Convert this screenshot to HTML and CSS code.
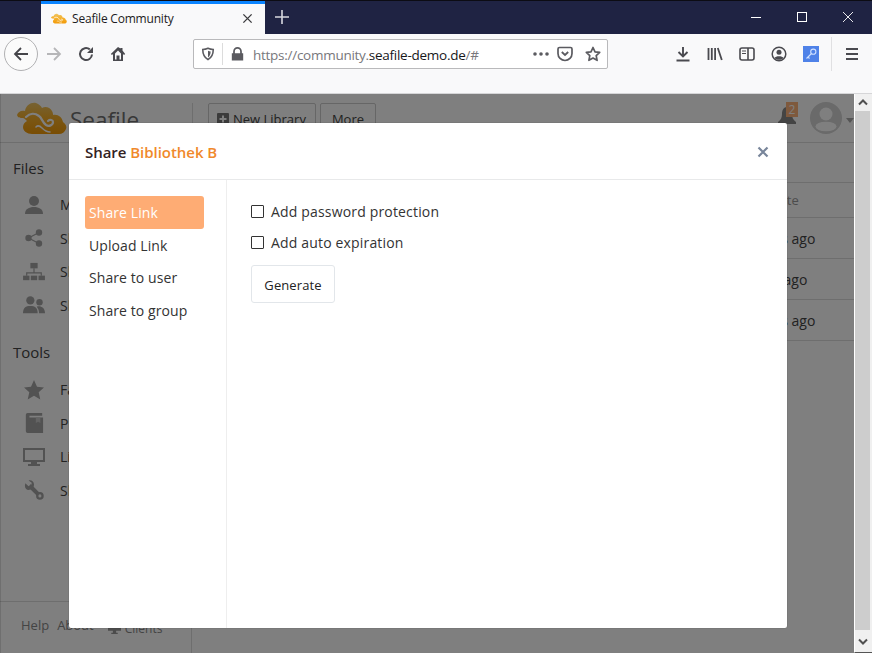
FILE: index.html
```html
<!DOCTYPE html>
<html lang="en">
<head>
<meta charset="utf-8">
<title>Seafile Community</title>
<link rel="stylesheet" href="styles.css">
</head>
<body>
<svg class="defs" width="0" height="0" aria-hidden="true">
  <defs>
    <linearGradient id="cloudgrad" x1="0" y1="0" x2="0" y2="1">
      <stop offset="0" stop-color="#eec566"/>
      <stop offset=".45" stop-color="#f5b02c"/>
      <stop offset="1" stop-color="#f29a08"/>
    </linearGradient>
    <symbol id="cloud" viewBox="0 0 50 32">
      <path fill="url(#cloudgrad)" d="M0 13C1 10 4 8 8 9 9 3 14 0 19 1c3 1 5 3 6 5 3-2 8-1 10 3 1 2 1 3 1 4 5-1 9 2 10 7 3 2 4 5 3 7-1 3-4 5-7 5H15C10 32 6 29 6 25c0-3 2-5 4-6-2-2-3-3-4-3-3 0-5 0-6-3z"/>
      <path fill="none" stroke="#fff" stroke-width="2.200" stroke-linecap="round" d="M9 15c4-4 9-4 13-1 3 2 3 6 7 9 3 2 7 0 7-3 0-2-3-3-5-1"/>
      <path fill="none" stroke="#fff" stroke-width="1.600" stroke-linecap="round" d="M19 25c2-2 4-1 6 1 2 2 5 4 8 4"/>
    </symbol>
  </defs>
</svg>
<div class="window">
  <div class="titlebar">
    <div class="tab">
      <svg class="favicon"><use href="#cloud"/></svg>
      <span class="tab-title">Seafile Community</span>
      <svg class="tab-close" viewBox="0 0 12 12"><path d="M1.500 1.500l9 9M10.500 1.500l-9 9" stroke="#3c3c3e" stroke-width="1.500" fill="none"/></svg>
    </div>
    <svg class="newtab" viewBox="0 0 14 14"><path d="M7 0v14M0 7h14" stroke="#d8d9e0" stroke-width="1.600" fill="none"/></svg>
    <div class="winctl">
      <svg class="winbtn" viewBox="0 0 10 10"><path d="M0 5.500h10" stroke="#fff" fill="none"/></svg>
      <svg class="winbtn" viewBox="0 0 10 10"><rect x=".5" y=".5" width="9" height="9" stroke="#fff" fill="none"/></svg>
      <svg class="winbtn" viewBox="0 0 10 10"><path d="M0 0l10 10M10 0L0 10" stroke="#fff" stroke-width=".9" fill="none"/></svg>
    </div>
  </div>
  <div class="toolbar">
    <div class="back"><svg class="ico" viewBox="0 0 16 16"><path d="M15 8H2M8 2L2 8l6 6" stroke="#45454a" stroke-width="1.800" fill="none"/></svg></div>
    <svg class="ico fwd" viewBox="0 0 16 16"><path d="M1 8h13M8 2l6 6-6 6" stroke="#b6b6b8" stroke-width="1.800" fill="none"/></svg>
    <svg class="ico reload" viewBox="0 0 16 16"><path d="M14 8.500A6 6 0 1 1 11.800 3.400" stroke="#4a4a4f" stroke-width="2" fill="none"/><path d="M15 1v6H9z" fill="#4a4a4f"/></svg>
    <svg class="ico home" viewBox="0 0 16 16"><path d="M8 1L.8 8l1.200 1L3 8v7h10V8l1 1 1.200-1L12.500 4.500V2h-2v.6z M5 13.500V7.500L8 4.500l3 3v6H9.500V9.500h-3v4z" fill="#4a4a4f" fill-rule="evenodd"/></svg>
    <div class="urlbar">
      <svg class="shield" viewBox="0 0 16 16"><path d="M8 1.500c2 .9 4 1.300 6 1.300 0 5-1.500 9-6 11.700C3.500 11.800 2 7.800 2 2.800c2 0 4-.4 6-1.300z" fill="none" stroke="#5b5b60" stroke-width="1.800"/><path d="M8 4.300c1 .4 2 .6 3 .7 0 3-1 5.500-3 7z" fill="#5b5b60"/></svg>
      <span class="url-divider"></span>
      <svg class="lock" viewBox="0 0 14 16"><path d="M2 7V5a5 5 0 0 1 10 0v2h1.500v8.500H.5V7zM4 7h6V5a3 3 0 0 0-6 0z" fill="#5b5b60" fill-rule="evenodd"/></svg>
      <span class="url"><span class="url-dim">https://community.</span>seafile-demo.de<span class="url-dim">/#</span></span>
      <svg class="dots" viewBox="0 0 16 4"><circle cx="2" cy="2" r="1.800" fill="#5b5b60"/><circle cx="8" cy="2" r="1.800" fill="#5b5b60"/><circle cx="14" cy="2" r="1.800" fill="#5b5b60"/></svg>
      <svg class="pocket" viewBox="0 0 16 16"><path d="M1 3c0-1 .5-1.500 1.500-1.500h11c1 0 1.500.5 1.500 1.500v4.500a7 7 0 0 1-14 0z" fill="none" stroke="#5b5b60" stroke-width="1.700"/><path d="M4.800 6L8 9l3.200-3" fill="none" stroke="#5b5b60" stroke-width="1.800"/></svg>
      <svg class="star" viewBox="0 0 16 16"><path d="M8 1.500l2 4.300 4.700.6-3.500 3.200.9 4.700L8 12l-4.100 2.300.9-4.700L1.300 6.400 6 5.800z" fill="none" stroke="#5b5b60" stroke-width="1.700" stroke-linejoin="round"/></svg>
    </div>
    <div class="tools">
      <svg class="ico" viewBox="0 0 16 16"><path d="M8 1v9M3.500 6L8 10.500 12.500 6M1.500 14.500h13" stroke="#4a4a4f" stroke-width="1.900" fill="none"/></svg>
      <svg class="ico" viewBox="0 0 16 16"><path d="M1.500 2v12M4.800 2v12M8.100 2v12M10.800 2l4 12" stroke="#4a4a4f" stroke-width="1.800" fill="none"/></svg>
      <svg class="ico" viewBox="0 0 16 16"><rect x="1" y="2" width="14" height="12" rx="2" fill="none" stroke="#4a4a4f" stroke-width="1.600"/><path d="M9 2v12" stroke="#4a4a4f" stroke-width="1.600"/><path d="M3 5h4M3 7.500h4" stroke="#4a4a4f" stroke-width="1.200"/></svg>
      <svg class="ico" viewBox="0 0 16 16"><circle cx="8" cy="8" r="6.800" fill="none" stroke="#4a4a4f" stroke-width="1.500"/><circle cx="8" cy="6.200" r="2.500" fill="#4a4a4f"/><path d="M3.500 12c1-2.300 8-2.300 9 0-2 2.400-7 2.400-9 0z" fill="#4a4a4f"/></svg>
      <svg class="ico" viewBox="0 0 16 16"><rect width="16" height="16" fill="#4f82e8"/><circle cx="10.300" cy="5.700" r="2.600" fill="none" stroke="#cfe0ff" stroke-width="1.100"/><path d="M8.500 7.500L3.500 12.500M5 11l1.500 1.500" stroke="#cfe0ff" stroke-width="1.100" fill="none"/></svg>
      <span class="tool-divider"></span>
      <svg class="ico menu" viewBox="0 0 16 16"><path d="M2 3h12M2 8h12M2 13h12" stroke="#4a4a4f" stroke-width="1.800" fill="none"/></svg>
    </div>
  </div>
  <div class="viewport">
    <div class="page">
      <header class="page-head">
        <div class="brand">
          <svg class="logo"><use href="#cloud"/></svg>
          <span class="brand-name">Seafile</span>
        </div>
        <button class="page-btn"><svg class="plus" viewBox="0 0 12 12"><rect width="12" height="12" rx="1" fill="#777"/><path d="M6 2.500v7M2.500 6h7" stroke="#fff" stroke-width="2"/></svg>New Library</button>
        <button class="page-btn">More</button>
        <div class="user">
          <div class="bell">
            <svg class="bell-icon" viewBox="0 0 18 17"><path d="M9 0c4 0 5 4 5 7 0 3 1 6 4 8v2H0v-2c3-2 4-5 4-8 0-3 1-7 5-7z" fill="#888"/></svg>
            <span class="badge">2</span>
          </div>
          <svg class="avatar" viewBox="0 0 32 32"><circle cx="16" cy="16" r="16" fill="#d4d4d4"/><circle cx="16" cy="12" r="6.500" fill="#fff"/><ellipse cx="16" cy="24.500" rx="10.500" ry="4.800" fill="#fff"/></svg>
          <span class="caret"></span>
        </div>
      </header>
      <div class="page-body">
        <aside class="side">
          <div class="side-main">
            <h3 class="side-title">Files</h3>
            <a class="side-item"><svg class="side-icon" viewBox="0 0 20 20"><circle cx="10" cy="6" r="5" fill="#a4a4a4"/><path d="M1 19c0-5 4-7 9-7s9 2 9 7z" fill="#a4a4a4"/></svg>My Libraries</a>
            <a class="side-item"><svg class="side-icon" viewBox="0 0 20 20"><circle cx="4.500" cy="10" r="3.200" fill="#a4a4a4"/><circle cx="15" cy="4.500" r="3.200" fill="#a4a4a4"/><circle cx="15" cy="15.500" r="3.200" fill="#a4a4a4"/><path d="M4.500 10L15 4.500M4.500 10L15 15.500" stroke="#a4a4a4" stroke-width="1.300"/></svg>Shared with me</a>
            <a class="side-item"><svg class="side-icon" viewBox="0 0 24 22"><rect x="8" y="1" width="8" height="6" fill="#a4a4a4"/><path d="M12 7v5M4 15v-3h16v3" stroke="#a4a4a4" stroke-width="1.300" fill="none"/><rect y="15" width="7" height="5" fill="#a4a4a4"/><rect x="8.500" y="15" width="7" height="5" fill="#a4a4a4"/><rect x="17" y="15" width="7" height="5" fill="#a4a4a4"/></svg>Shared with all</a>
            <a class="side-item"><svg class="side-icon" viewBox="0 0 24 20"><circle cx="8" cy="5" r="4.500" fill="#a4a4a4"/><circle cx="18" cy="7" r="3.500" fill="#a4a4a4"/><path d="M0 19c0-6 3-8 8-8s8 2 8 8z" fill="#a4a4a4"/><path d="M17.500 19c0-3-1-5-2.500-7 3-1.500 9 0 9 7z" fill="#a4a4a4"/></svg>Shared groups</a>
            <h3 class="side-title side-tools">Tools</h3>
            <a class="side-item"><svg class="side-icon" viewBox="0 0 20 20"><path d="M10 0l3 6.800 7 .7-5.300 4.700 1.600 7.300-6.300-3.800-6.300 3.800 1.600-7.300L0 7.500l7-.7z" fill="#a4a4a4"/></svg>Favorites</a>
            <a class="side-item"><svg class="side-icon" viewBox="0 0 20 22"><path d="M3 0h16v3H5v2h15v17H3a2 2 0 0 1-2-2V2a2 2 0 0 1 2-2z" fill="#a4a4a4"/><path d="M12 5h5v6l-2.500-1.500L12 11z" fill="#c8c8c8"/></svg>Published</a>
            <a class="side-item"><svg class="side-icon" viewBox="0 0 22 20"><path d="M0 1h22v14H14v2h3v2H5v-2h3v-2H0zM2 3v10h18V3z" fill="#a4a4a4" fill-rule="evenodd"/></svg>Linked Devices</a>
            <a class="side-item"><svg class="side-icon" viewBox="0 0 22 22"><path d="M6 6l12 12" stroke="#a4a4a4" stroke-width="4.500" fill="none"/><path d="M1.500 3.500L5 7l3-.5L8.500 3 5 .5C8 -.5 11 1.500 11 5s-3 6-6 6-5-3-3.500-7.500z" fill="#a4a4a4"/><circle cx="17.500" cy="17.500" r="4.200" fill="#a4a4a4"/><circle cx="17.500" cy="17.500" r="1.700" fill="#fff"/></svg>Share Admin</a>
          </div>
          <footer class="side-foot">
            <a>Help</a><a>About</a>
            <a class="foot-clients"><svg class="foot-icon" viewBox="0 0 12 10"><path d="M0 0h12v7H7.500v2H9v1H3V9h1.500V7H0z" fill="#999"/></svg>Clients</a>
          </footer>
        </aside>
        <main class="content">
          <div class="tabs-row"></div>
          <div class="row row-head"><span></span><span class="col-time">Last Update</span></div>
          <div class="row"><span></span><span class="col-time">11 months ago</span></div>
          <div class="row"><span></span><span class="col-time">3 months ago</span></div>
          <div class="row"><span></span><span class="col-time">11 months ago</span></div>
        </main>
      </div>
      <div class="backdrop"></div>
      <section class="modal">
        <div class="modal-head">
          <h2 class="modal-title">Share <span class="modal-name">Bibliothek B</span></h2>
          <svg class="modal-close" viewBox="0 0 12 12"><path d="M1.500 1.500l9 9M10.500 1.500l-9 9" stroke="#78859a" stroke-width="2.200" fill="none"/></svg>
        </div>
        <div class="modal-body">
          <nav class="modal-nav">
            <a class="nav-link is-active">Share Link</a>
            <a class="nav-link">Upload Link</a>
            <a class="nav-link">Share to user</a>
            <a class="nav-link">Share to group</a>
          </nav>
          <div class="modal-main">
            <label class="check"><span class="box"></span>Add password protection</label>
            <label class="check"><span class="box"></span>Add auto expiration</label>
            <button class="generate">Generate</button>
          </div>
        </div>
      </section>
    </div>
    <div class="scrollbar">
      <div class="scroll-btn"><svg class="scroll-arrow" viewBox="0 0 10 7"><path d="M1 5.500l4-4 4 4" stroke="#505050" stroke-width="2" fill="none"/></svg></div>
      <div class="scroll-thumb"></div>
      <div class="scroll-btn scroll-btn-down"><svg class="scroll-arrow" viewBox="0 0 10 7"><path d="M1 1.500l4 4 4-4" stroke="#505050" stroke-width="2" fill="none"/></svg></div>
    </div>
  </div>
</div>
</body>
</html>
```
FILE: styles.css
```css
* { box-sizing: border-box; }
html, body { margin: 0; padding: 0; height: 100%; overflow: hidden; }
body { font-family: "Open Sans", "Noto Sans", sans-serif; color: #333; background: #fff; }
a { display: block; }
h2, h3 { margin: 0; }
.defs { display: block; height: 0; }
.window { width: 872px; height: 653px; display: flex; flex-direction: column; }

/* Title bar */
.titlebar { height: 34px; flex: none; background: #1f2343; border-top: 1px solid #0c0c14; display: flex; align-items: flex-start; padding-left: 41px; }
.tab { width: 224px; height: 33px; background: #f9f9fa; border-top: 3px solid #0a84ff; display: flex; align-items: center; padding: 0 11px 1px 10px; }
.favicon { width: 16px; height: 11px; margin-right: 5px; }
.tab-title { font-size: 12px; color: #1c1b22; flex: 1; letter-spacing: -.2px; }
.tab-close { width: 11px; height: 11px; margin: 0 1px 1px 0; }
.newtab { width: 14px; height: 14px; margin: 9px 0 0 10px; }
.winctl { margin-left: auto; display: flex; margin-right: 19px; margin-top: 11px; gap: 36px; }
.winbtn { width: 10px; height: 10px; }

/* Toolbar */
.toolbar { height: 60px; flex: none; background: #f9f9fa; border-bottom: 1px solid #d6d6d8; display: flex; align-items: flex-start; padding: 3px 0 0 4px; }
.back { width: 34px; height: 34px; border: 1px solid #b1b1b3; border-radius: 50%; background: #fbfbfb; display: flex; align-items: center; justify-content: center; }
.ico { width: 16px; height: 16px; flex: none; }
.fwd { margin: 9px 0 0 8px; }
.reload { margin: 9px 0 0 16px; }
.home { margin: 9px 0 0 16px; }
.urlbar { width: 415px; height: 30px; margin: 2px 0 0 67px; background: #fff; border: 1px solid #b9b9bb; border-radius: 2px; display: flex; align-items: center; padding: 0 6px 0 7px; }
.shield { width: 14px; height: 14px; }
.url-divider { width: 1px; height: 22px; background: #dcdcdc; margin: 0 8px 0 7px; }
.lock { width: 13px; height: 14px; }
.url { font-size: 13.500px; line-height: 20px; padding-top: 1px; color: #17171a; margin-left: 9px; flex: 1; white-space: nowrap; letter-spacing: -.27px; }
.url-dim { color: #77777c; }
.dots { width: 16px; height: 4px; margin-right: 8px; }
.pocket { width: 16px; height: 16px; margin-right: 12px; }
.star { width: 16px; height: 16px; }
.tools { display: flex; align-items: center; gap: 16px; margin-left: 67px; height: 34px; }
.tool-divider { width: 1px; height: 34px; background: #e0e0e2; margin-left: -4px; }
.menu { margin-left: -4px; }

/* Viewport */
.viewport { flex: 1; min-height: 0; display: flex; }
.page { flex: 1; position: relative; background: #fff; overflow: hidden; display: flex; flex-direction: column; }
.page-head { height: 49px; flex: none; border-bottom: 1px solid #ddd; display: flex; align-items: flex-start; padding-top: 9px; }
.brand { width: 193px; height: 39px; border-right: 1px solid #ddd; display: flex; align-items: flex-start; padding-left: 17px; flex: none; }
.logo { width: 50px; height: 32px; margin-top: -1px; flex: none; }
.brand-name { font-size: 22.500px; line-height: 33px; color: #707070; margin-left: 3px; }
.page-btn { height: 34px; border: 1px solid #ccc; background: #fff; border-radius: 2px; font: 13px "Open Sans", sans-serif; color: #444; margin-left: 4px; padding: 0 11px 2px; display: flex; align-items: center; }
.page-btn:first-of-type { margin-left: 15px; padding: 0 9px 2px 8px; }
.plus { width: 12px; height: 12px; margin-right: 4px; }
.user { margin-left: auto; display: flex; align-items: flex-start; padding-right: 0; }
.bell { position: relative; width: 18px; height: 17px; margin: 4px 14px 0 0; }
.bell-icon { display: block; width: 18px; height: 17px; }
.badge { position: absolute; left: 8px; top: -5px; width: 12px; height: 15px; background: #fdb27a; color: #fff; font-size: 12px; line-height: 15px; text-align: center; }
.avatar { width: 32px; height: 32px; margin-top: -1px; }
.caret { width: 0; height: 0; border: 4px solid transparent; border-top: 5px solid #aaa; margin: 15px 0 0 4px; }

.page-body { flex: 1; min-height: 0; display: flex; }
.side { width: 192px; flex: none; border-right: 1px solid #ddd; display: flex; flex-direction: column; }
.side-main { flex: 1; padding: 15px 0 0 13px; }
.side-title { font-size: 15px; font-weight: 400; color: #444; line-height: 20px; margin-bottom: 10px; }
.side-tools { margin: 20px 0 11px; }
.side-item { display: flex; align-items: center; height: 33.500px; font-size: 14px; color: #444; white-space: nowrap; }
.side-icon { width: 22px; height: 20px; margin: 0 15px 0 10px; flex: none; }
.side-foot { height: 52px; flex: none; border-top: 1px solid #ddd; display: flex; font-size: 13px; color: #888; padding: 14px 0 0 21px; gap: 8px; }
.foot-clients { display: flex; align-items: center; height: 24px; margin-left: 6px; font-size: 12px; }
.foot-icon { width: 13px; height: 11px; margin-right: 4px; }

.content { flex: 1; min-width: 0; }
.tabs-row { height: 40px; border-bottom: 1px solid #ddd; }
.row { height: 41px; padding-top: 1px; border-bottom: 1px solid #ddd; display: flex; align-items: center; justify-content: space-between; font-size: 14px; color: #444; }
.row-head { height: 35px; padding-top: 0; font-size: 13px; color: #999; }
.row-head .col-time { padding-left: 8px; }
.col-time { width: 136px; white-space: nowrap; }

.backdrop { position: absolute; inset: 0; background: rgba(0, 0, 0, .5); box-shadow: inset 1px 0 0 rgba(0, 0, 0, .12); }

/* Modal */
.modal { position: absolute; left: 69px; top: 29px; width: 718px; height: 505px; background: #fff; box-shadow: 0 0 1px rgba(0,0,0,.5); border-radius: 2px; display: flex; flex-direction: column; }
.modal-head { height: 57px; flex: none; padding: 2px 18px 0 16px; border-bottom: 1px solid #e8e9ea; display: flex; align-items: center; justify-content: space-between; }
.modal-title { font-size: 15px; font-weight: 600; letter-spacing: -.04px; color: #322; }
.modal-name { color: #f0892b; }
.modal-close { width: 12px; height: 12px; }
.modal-body { flex: 1; min-height: 0; display: flex; }
.modal-nav { width: 158px; flex: none; border-right: 1px solid #eeeeee; padding: 16px 22px 0 16px; }
.nav-link { height: 32.400px; line-height: 33px; padding-left: 4px; font-size: 14px; letter-spacing: .08px; color: #333; border-radius: 3px; white-space: nowrap; }
.nav-link.is-active { background: #feac74; color: #fff; height: 33px; }
.modal-main { flex: 1; padding: 16px 24px; }
.check { display: flex; align-items: center; height: 31px; font-size: 14px; letter-spacing: .17px; color: #333; }
.box { width: 13px; height: 13px; border: 1px solid #333; background: #fff; margin-right: 7px; border-radius: 1px; }
.generate { display: block; margin-top: 7px; width: 84px; height: 38px; padding: 2px 0 0; background: #fff; border: 1px solid #e2e6ea; border-radius: 3px; font: 500 13px "Open Sans", sans-serif; letter-spacing: .1px; color: #222; }

/* Scrollbar */
.scrollbar { width: 18px; flex: none; background: #f0f0f0; display: flex; flex-direction: column; border-left: 1px solid #fff; border-bottom: 1px solid #555; }
.scroll-btn { height: 17px; flex: none; display: flex; align-items: center; justify-content: center; padding-right: 2px; }
.scroll-btn-down { height: 22px; padding-top: 1px; }
.scroll-thumb { flex: 1; background: #cdcdcd; width: 15px; }
.scroll-arrow { width: 10px; height: 7px; }
```
